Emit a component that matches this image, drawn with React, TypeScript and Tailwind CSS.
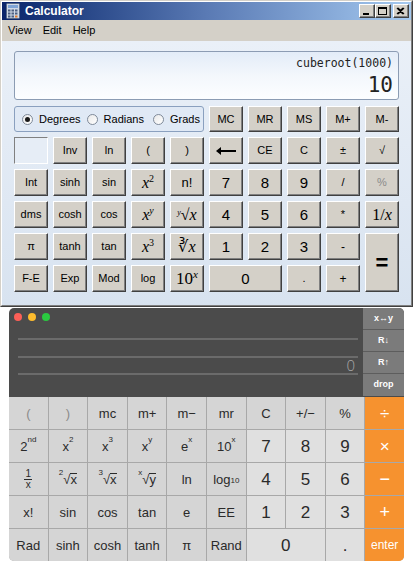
import React from "react";

const WinFont = "font-['Liberation_Sans',Arial,sans-serif]";

function WB({ children, className = "" }: { children?: React.ReactNode; className?: string }) {
  return (
    <div
      className={`flex items-center justify-center bg-[#d4d0c8] border border-t-white border-l-white border-r-[#404040] border-b-[#404040] shadow-[inset_-1px_-1px_0_#808080] text-[11px] text-black leading-none ${className}`}
    >
      {children}
    </div>
  );
}

function Radio({ checked = false }: { checked?: boolean }) {
  return (
    <span className="w-[11px] h-[11px] rounded-full border border-[#7f8a99] bg-linear-to-br from-[#e9e9e9] to-white flex items-center justify-center shrink-0">
      {checked && <span className="w-[5px] h-[5px] rounded-full bg-[#1a1a1a]" />}
    </span>
  );
}

const Serif = ({ children, className = "" }: { children: React.ReactNode; className?: string }) => (
  <span className={`font-['Liberation_Serif','Times_New_Roman',serif] text-[16px] leading-none ${className}`}>{children}</span>
);

function CalcIcon() {
  return (
    <svg width="14" height="16" viewBox="0 0 14 16">
      <rect x="0.5" y="0.5" width="13" height="15" rx="1" fill="#cfd8e6" stroke="#5a6b88" />
      <rect x="2" y="2" width="10" height="3" fill="#7fa4d6" />
      {[0, 1, 2].map((r) =>
        [0, 1, 2].map((c) => (
          <rect key={`${r}-${c}`} x={2 + c * 3.5} y={6.5 + r * 3} width="2.5" height="2" fill={c === 2 && r === 2 ? "#e07a2a" : "#4d5f80"} />
        ))
      )}
    </svg>
  );
}

function TitleBtn({ kind }: { kind: "min" | "max" | "close" }) {
  return (
    <div className="w-[16px] h-[14px] bg-[#d4d0c8] border border-t-white border-l-white border-r-[#404040] border-b-[#404040] shadow-[inset_-1px_-1px_0_#808080] flex items-center justify-center">
      <svg width="10" height="9" viewBox="0 0 10 9">
        {kind === "min" && <rect x="1" y="6" width="6" height="2" fill="#000" />}
        {kind === "max" && (
          <>
            <rect x="0.5" y="0.5" width="8" height="7" fill="none" stroke="#000" />
            <rect x="0" y="0" width="9" height="2" fill="#000" />
          </>
        )}
        {kind === "close" && (
          <path d="M1 1 L7 7 M7 1 L1 7 M2 1 L8 7 M8 1 L2 7" stroke="#000" strokeWidth="1.2" fill="none" />
        )}
      </svg>
    </div>
  );
}

function WindowsCalc() {
  return (
    <div className={`w-[413px] h-[307px] border border-[#d4d0c8] border-r-[#404040] border-b-[#404040] ${WinFont}`}>
      <div className="h-full border border-white border-r-[#808080] border-b-[#808080] bg-[#d4d0c8] flex flex-col">
        {/* title bar */}
        <div className="h-[18px] bg-linear-to-r from-[#0a246a] via-[#5a7ab4] to-[#a6caf0] flex items-center pl-[4px] pr-[2px]">
          <CalcIcon />
          <span className="ml-[5px] text-white font-bold text-[12px] leading-none">Calculator</span>
          <div className="ml-auto flex items-center">
            <TitleBtn kind="min" />
            <TitleBtn kind="max" />
            <div className="w-[2px]" />
            <TitleBtn kind="close" />
          </div>
        </div>
        {/* menu bar */}
        <div className="h-[21px] flex items-center pl-[6px] gap-[11px] text-[11px] text-black">
          <span>View</span>
          <span>Edit</span>
          <span>Help</span>
        </div>
        {/* content */}
        <div className="flex-1 bg-linear-to-b from-[#eaf0f8] to-[#d8e3f0] px-[12px] pt-[10px]">
          <div className="h-[49px] rounded-[3px] border border-[#8c9cb3] bg-linear-to-b from-[#e3ecf8] via-[#f3f7fc] to-[#fdfeff] flex flex-col items-end pr-[5px] pt-[5px] font-['DejaVu_Sans_Mono',monospace] text-[#222]">
            <span className="text-[11.5px] leading-[13px]">cuberoot(1000)</span>
            <span className="text-[21px] leading-[24px] mt-[3px]">10</span>
          </div>
          <div className="mt-[6px] grid grid-cols-[repeat(10,34px)] grid-rows-[26px_repeat(5,27px)] gap-[5px]">
            <div className="col-span-5 rounded-[3px] border border-[#8aa0bf] bg-[#e0e9f5] flex items-center pl-[7px] text-[11px] text-black">
              <Radio checked />
              <span className="ml-[6px]">Degrees</span>
              <span className="ml-[6px]"><Radio /></span>
              <span className="ml-[6px]">Radians</span>
              <span className="ml-[9px]"><Radio /></span>
              <span className="ml-[6px]">Grads</span>
            </div>
            <WB>MC</WB>
            <WB>MR</WB>
            <WB>MS</WB>
            <WB>M+</WB>
            <WB>M-</WB>

            <div className="border border-t-[#808080] border-l-[#808080] border-r-white border-b-white bg-[#e6edf6]" />
            <WB>Inv</WB>
            <WB>ln</WB>
            <WB>(</WB>
            <WB>)</WB>
            <WB>
              <svg width="20" height="8" viewBox="0 0 20 8">
                <path d="M5 0 L0 4 L5 8 Z" fill="#000" />
                <rect x="3" y="3" width="17" height="2" fill="#000" />
              </svg>
            </WB>
            <WB>CE</WB>
            <WB>C</WB>
            <WB className="text-[10px]">±</WB>
            <WB className="text-[10px]">√</WB>

            <WB>Int</WB>
            <WB>sinh</WB>
            <WB>sin</WB>
            <WB>
              <Serif><i>x</i><sup className="text-[10px] -top-[6px]">2</sup></Serif>
            </WB>
            <WB className="text-[13px]">n!</WB>
            <WB className="text-[15px]">7</WB>
            <WB className="text-[15px]">8</WB>
            <WB className="text-[15px]">9</WB>
            <WB className="text-[10px]">/</WB>
            <WB className="text-[10px]">
              <span className="text-[#8a8a8a]">%</span>
            </WB>

            <WB>dms</WB>
            <WB>cosh</WB>
            <WB>cos</WB>
            <WB>
              <Serif><i>x</i><sup className="text-[10px] -top-[6px]"><i>y</i></sup></Serif>
            </WB>
            <WB>
              <Serif>
                <sup className="text-[8px] -top-[5px]"><i>y</i></sup>√<i>x</i>
              </Serif>
            </WB>
            <WB className="text-[15px]">4</WB>
            <WB className="text-[15px]">5</WB>
            <WB className="text-[15px]">6</WB>
            <WB className="text-[10px]">*</WB>
            <WB>
              <Serif className="text-[13px]">1/<i>x</i></Serif>
            </WB>

            <WB>π</WB>
            <WB>tanh</WB>
            <WB>tan</WB>
            <WB>
              <Serif><i>x</i><sup className="text-[10px] -top-[6px]">3</sup></Serif>
            </WB>
            <WB>
              <Serif>∛<i>x</i></Serif>
            </WB>
            <WB className="text-[15px]">1</WB>
            <WB className="text-[15px]">2</WB>
            <WB className="text-[15px]">3</WB>
            <WB className="text-[12px]">-</WB>
            <WB className="row-span-2 text-[22px] font-bold">=</WB>

            <WB>F-E</WB>
            <WB>Exp</WB>
            <WB>Mod</WB>
            <WB>log</WB>
            <WB>
              <Serif className="text-[17px]">10<sup className="text-[11px] -top-[6px]"><i>x</i></sup></Serif>
            </WB>
            <WB className="col-span-2 text-[15px]">0</WB>
            <WB className="text-[10px]">.</WB>
            <WB className="text-[12px]">+</WB>
          </div>
        </div>
      </div>
    </div>
  );
}

function MC({ children, kind = "fn", className = "" }: { children?: React.ReactNode; kind?: "fn" | "num" | "op"; className?: string }) {
  const bg = kind === "num" ? "bg-[#e0e0e0] text-[#2a2a2a]" : kind === "op" ? "bg-[#f6922f] text-white" : "bg-[#d5d5d5] text-[#2a2a2a]";
  return <div className={`flex items-center justify-center leading-none ${bg} ${className}`}>{children}</div>;
}

const Sup = ({ children }: { children: React.ReactNode }) => (
  <sup className="text-[8px] -top-[6px]">{children}</sup>
);

function MacCalc() {
  return (
    <div className="ml-[9px] mt-px w-[395px] h-[253px] rounded-[5px] overflow-hidden flex flex-col font-['Liberation_Sans',Arial,sans-serif]">
      <div className="h-[89px] flex bg-[#4b4b4b]">
        <div className="flex-1 flex flex-col">
          <div className="flex gap-[6px] pl-[5px] pt-[5px]">
            <span className="w-[8px] h-[8px] rounded-full bg-[#fc5f57]" />
            <span className="w-[8px] h-[8px] rounded-full bg-[#fdbc2e]" />
            <span className="w-[8px] h-[8px] rounded-full bg-[#2ac940]" />
          </div>
          <div className="ml-[9px] mr-[5px] mt-[17px] h-[2px] bg-[#6b6b6b]" />
          <div className="ml-[9px] mr-[5px] mt-[16px] h-[2px] bg-[#6b6b6b]" />
          <div className="ml-[9px] mr-[5px] h-[15px] flex items-end justify-end pr-[3px]">
            <span className="font-['Open_Sans',sans-serif] font-light text-[15px] leading-none text-[#a9a9a9]">0</span>
          </div>
          <div className="ml-[9px] mr-[5px] h-[2px] bg-[#6b6b6b]" />
        </div>
        <div className="w-[41px] flex flex-col text-white font-bold text-[9px]">
          {["x↔y", "R↓", "R↑", "drop"].map((t, i) => (
            <div key={t} className={`h-[22px] flex items-center justify-center bg-[#7b7b7b] ${i < 3 ? "border-b border-[#5d5d5d]" : ""}`}>
              {t}
            </div>
          ))}
        </div>
      </div>
      <div className="flex-1 grid grid-cols-10 grid-rows-5 gap-px bg-[#a8a8a8] text-[13px]">
        <MC><span className="text-[#8a8a8a]">(</span></MC>
        <MC><span className="text-[#8a8a8a]">)</span></MC>
        <MC>mc</MC>
        <MC>m+</MC>
        <MC>m−</MC>
        <MC>mr</MC>
        <MC>C</MC>
        <MC>+/−</MC>
        <MC>%</MC>
        <MC kind="op" className="text-[17px] font-light">÷</MC>

        <MC>2<Sup>nd</Sup></MC>
        <MC>x<Sup>2</Sup></MC>
        <MC>x<Sup>3</Sup></MC>
        <MC>x<Sup>y</Sup></MC>
        <MC>e<Sup>x</Sup></MC>
        <MC>10<Sup>x</Sup></MC>
        <MC kind="num" className="text-[17px]">7</MC>
        <MC kind="num" className="text-[17px]">8</MC>
        <MC kind="num" className="text-[17px]">9</MC>
        <MC kind="op" className="text-[17px] font-light">×</MC>

        <MC>
          <span className="flex flex-col items-center text-[10px] leading-[10px]">
            <span>1</span>
            <span className="w-[8px] h-px bg-[#2a2a2a]" />
            <span>x</span>
          </span>
        </MC>
        <MC><Sup>2</Sup>√<span className="border-t border-[#2a2a2a] leading-[12px]">x</span></MC>
        <MC><Sup>3</Sup>√<span className="border-t border-[#2a2a2a] leading-[12px]">x</span></MC>
        <MC><Sup>x</Sup>√<span className="border-t border-[#2a2a2a] leading-[12px]">y</span></MC>
        <MC>ln</MC>
        <MC>log<sub className="text-[8px]">10</sub></MC>
        <MC kind="num" className="text-[17px]">4</MC>
        <MC kind="num" className="text-[17px]">5</MC>
        <MC kind="num" className="text-[17px]">6</MC>
        <MC kind="op" className="text-[18px] font-light">−</MC>

        <MC>x!</MC>
        <MC>sin</MC>
        <MC>cos</MC>
        <MC>tan</MC>
        <MC>e</MC>
        <MC>EE</MC>
        <MC kind="num" className="text-[17px]">1</MC>
        <MC kind="num" className="text-[17px]">2</MC>
        <MC kind="num" className="text-[17px]">3</MC>
        <MC kind="op" className="text-[18px] font-light">+</MC>

        <MC>Rad</MC>
        <MC>sinh</MC>
        <MC>cosh</MC>
        <MC>tanh</MC>
        <MC>π</MC>
        <MC>Rand</MC>
        <MC kind="num" className="col-span-2 text-[17px]">0</MC>
        <MC kind="num" className="text-[17px]">.</MC>
        <MC kind="op" className="text-[12px]">enter</MC>
      </div>
    </div>
  );
}

export default function App() {
  return (
    <div className="w-[413px] h-[561px] bg-white overflow-hidden">
      <WindowsCalc />
      <MacCalc />
    </div>
  );
}
